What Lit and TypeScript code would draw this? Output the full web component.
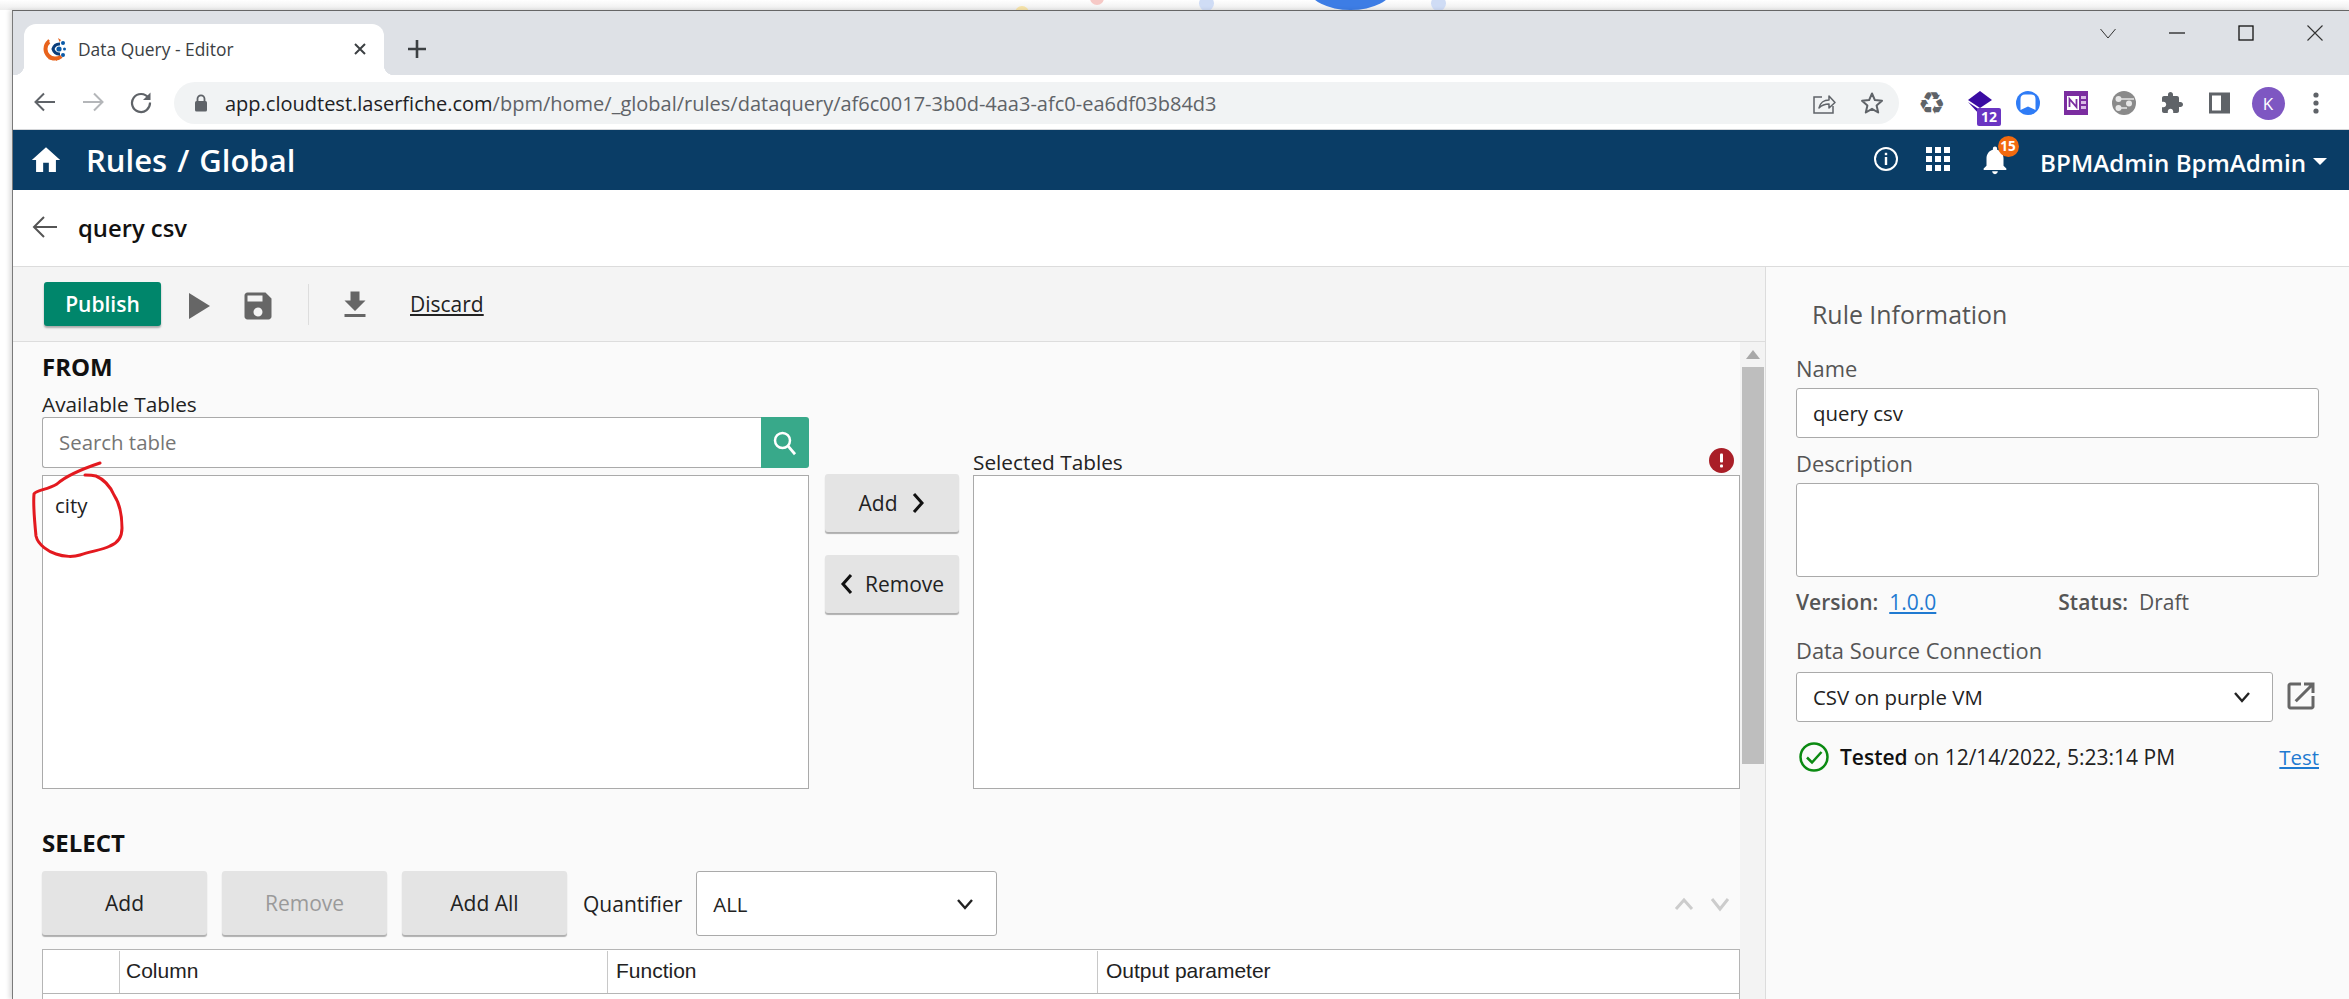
import { LitElement, html, css, svg } from "lit";
import { customElement } from "lit/decorators.js";

const ic = (cls: string, vb: string, body: unknown) =>
  html`<svg class=${cls} viewBox=${vb} aria-hidden="true">${body}</svg>`;

@customElement("app-root")
export class AppRoot extends LitElement {
  static styles = css`
    :host { display: block; width: 2349px; height: 999px; overflow: hidden; background: #fff; font-family: "Open Sans", "Noto Sans", sans-serif; color: #222; }
    svg { display: block; flex: none; }
    .strip { height: 10px; position: relative; overflow: hidden; background: linear-gradient(#fff, #ededed); }
    .blob { position: absolute; border-radius: 50%; }
    .shell { margin-left: 12px; border-left: 1px solid #7a7a7a; border-top: 1px solid #666; display: flex; flex-direction: column; height: 988px; box-shadow: -3px 0 4px rgba(0,0,0,.12); position: relative; }

    .tabbar { height: 64px; background: #dee1e6; display: flex; flex: none; }
    .tab { margin: 13px 0 0 11px; width: 360px; height: 51px; background: #fff; border-radius: 12px 12px 0 0; display: flex; align-items: center; position: relative; padding-bottom: 1px; box-sizing: border-box; }
    .tab::before, .tab::after { content: ""; position: absolute; bottom: 0; width: 10px; height: 10px; }
    .tab::before { left: -10px; background: radial-gradient(circle at 0 0, transparent 10px, #fff 10.5px); }
    .tab::after { right: -10px; background: radial-gradient(circle at 100% 0, transparent 10px, #fff 10.5px); }
    .fav { width: 24px; height: 26px; margin-left: 18px; }
    .tabtitle { margin-left: 12px; font-size: 17.4px; color: #3c4043; flex: 1; white-space: nowrap; }
    .tabx { width: 14px; height: 14px; margin-right: 17px; }
    .plus { width: 20px; height: 20px; margin: 28px 0 0 23px; }
    .winctl { margin-left: auto; display: flex; }
    .win { width: 69px; height: 44px; display: flex; align-items: center; justify-content: center; }
    .win svg { width: 16px; height: 16px; }

    .chrome { height: 54px; border-bottom: 1px solid #d4d6d9; background: #fff; display: flex; align-items: center; flex: none; padding-left: 8px; box-sizing: content-box; }
    .slot { width: 48px; height: 48px; display: flex; align-items: center; justify-content: center; flex: none; position: relative; }
    .slot svg { width: 24px; height: 24px; }
    .pill { margin-left: 9px; width: 1725px; height: 42px; border-radius: 21px; background: #f1f3f4; display: flex; align-items: center; flex: none; box-sizing: border-box; padding-right: 3px; margin-top: 2px; }
    .lock { width: 14px; height: 18px; margin-left: 20px; }
    .url { margin-left: 17px; font-size: 20px; color: #5f6368; white-space: nowrap; flex: 1; }
    .url b { font-weight: 400; color: #202124; }
    .exts { display: flex; margin-left: 9px; margin-top: 2px; }
    .recycle { font-family: "DejaVu Sans", sans-serif; font-size: 31px; color: #5f6368; line-height: 1; }
    .extbadge { position: absolute; left: 21px; top: 29px; width: 24px; height: 18px; border-radius: 2px; background: #6a35c2; color: #fff; font-size: 14px; font-weight: 700; line-height: 18px; text-align: center; }
    .avatar { width: 33px; height: 33px; border-radius: 50%; background: #7e57c2; color: #fff; font-size: 17px; line-height: 33px; text-align: center; }

    .nav { height: 60px; flex: none; background: #0a3d66; color: #fff; display: flex; align-items: center; }
    .home { width: 34px; height: 34px; margin-left: 16px; }
    .crumb { margin-left: 23px; font-size: 31px; font-weight: 600; white-space: pre; line-height: 40px; margin-top: -1px; word-spacing: 2px; }
    .navr { margin-left: auto; display: flex; align-items: center; }
    .info { width: 26px; height: 26px; margin-top: -2px; }
    .grid { width: 24px; height: 24px; margin-left: 27px; margin-top: -2px; }
    .bellbox { width: 34px; height: 34px; margin-left: 28px; position: relative; }
    .bellbox svg { width: 34px; height: 34px; }
    .bdg { position: absolute; left: 19.5px; top: -7px; width: 21px; height: 21px; border-radius: 50%; background: #f26a0f; color: #fff; font-size: 13.5px; font-weight: 700; line-height: 21px; text-align: center; }
    .user { margin-left: 28px; font-size: 24.2px; font-weight: 600; line-height: 32px; white-space: nowrap; margin-top: 5px; }
    .caret { width: 0; height: 0; border-left: 7.5px solid transparent; border-right: 7.5px solid transparent; border-top: 7.5px solid #fff; margin: 2px 22px 0 7px; }

    .sub { height: 76px; flex: none; border-bottom: 1px solid #dcdcdc; display: flex; align-items: center; background: #fff; }
    .sub svg { width: 26px; height: 24px; margin-left: 19px; margin-top: -2px; }
    .sub span { margin-left: 20px; font-size: 23.8px; font-weight: 600; color: #111; line-height: 30px; margin-top: -1px; }

    .work { flex: 1; min-height: 0; display: flex; overflow: hidden; }
    .main { width: 1752px; flex: none; display: flex; flex-direction: column; }
    .tools { height: 74px; flex: none; background: #f4f4f4; border-bottom: 1px solid #ddd; display: flex; align-items: center; }
    .publish { margin-left: 31px; width: 117px; height: 44px; background: #00866b; color: #fff; border-radius: 3px; box-shadow: 0 2px 2px rgba(0,0,0,.3); font-size: 21px; font-weight: 600; line-height: 44px; text-align: center; margin-top: -1px; }
    .play { width: 21px; height: 26px; margin-left: 28px; margin-top: 4px; }
    .save { width: 36px; height: 36px; margin-left: 30px; margin-top: 4px; }
    .divider { width: 1px; height: 41px; background: #ddd; margin-left: 32px; margin-top: 1px; }
    .dl { width: 36px; height: 36px; margin-left: 28px; margin-top: 2px; }
    .discard { margin-left: 37px; font-size: 21px; color: #222; text-decoration: underline; margin-top: -1px; }

    .body { flex: 1; min-height: 0; display: flex; background: #fafafa; }
    .content { width: 1727px; flex: none; padding-left: 29px; box-sizing: border-box; position: relative; }
    .h { font-size: 24px; font-weight: 700; line-height: 28px; color: #111; }
    .from { margin-top: 11px; }
    .lbl { font-size: 20.8px; line-height: 26px; color: #222; white-space: nowrap; }
    .transfer { display: flex; align-items: flex-end; margin-top: 10px; }
    .col { width: 767px; flex: none; }
    .search { height: 51px; display: flex; margin-bottom: 7px; }
    .searchbox { flex: 1; border: 1px solid #aaa; border-right: 0; border-radius: 3px 0 0 3px; background: #fff; font-size: 20.4px; color: #757575; line-height: 48px; padding-left: 16px; }
    .searchbtn { width: 48px; background: #38a98a; border-radius: 0 3px 3px 0; display: flex; align-items: center; justify-content: center; }
    .searchbtn svg { width: 30px; height: 30px; }
    .list { height: 314px; border: 1px solid #aaa; background: #fff; box-sizing: border-box; padding: 14px 0 0 12px; font-size: 20.4px; line-height: 30px; color: #222; }
    .mid { width: 134px; height: 315px; margin: 0 14px 0 16px; display: flex; flex-direction: column; gap: 23px; flex: none; }
    .btn { background: #e4e4e4; border-radius: 3px; box-shadow: 0 2px 1px rgba(0,0,0,.3); font-size: 21px; color: #222; display: flex; align-items: center; justify-content: center; flex: none; }
    .btn.t { height: 58px; }
    .btn.t svg { width: 14px; height: 22px; }
    .btn.add svg { margin-left: 14px; }
    .btn.rem svg { margin-right: 11px; }
    .reqrow { display: flex; align-items: center; justify-content: space-between; }
    .err { width: 25px; height: 25px; margin-right: 6px; margin-top: -4px; }
    .sel { margin-top: 40px; }
    .selrow { display: flex; align-items: flex-start; margin-top: 14px; height: 65px; }
    .btn.s { width: 165px; height: 64px; margin-right: 15px; }
    .btn.dis { color: #9a9a9a; }
    .qlbl { font-size: 21px; line-height: 66px; margin-right: 14px; margin-left: 1px; }
    .dropdown { border: 1px solid #aaa; border-radius: 3px; background: #fff; box-sizing: border-box; display: flex; align-items: center; font-size: 20.4px; color: #222; flex: none; }
    .q { width: 301px; height: 65px; padding: 1px 0 0 16px; }
    .q svg { width: 20px; height: 20px; margin-left: auto; margin-right: 21px; margin-top: -1px; }
    .updown { margin-left: auto; display: flex; height: 65px; align-items: center; margin-right: 2px; }
    .updown svg { width: 36px; height: 20px; }
    .table { margin-top: 13px; width: 1698px; height: 60px; border: 1px solid #b5b5b5; border-width: 1.5px 1px 0; background: #fff; box-sizing: border-box; font-family: "Liberation Sans", Arial, sans-serif; font-size: 21px; color: #222; }
    .thead { height: 43px; display: grid; grid-template-columns: 77px 488px 490px 1fr; border-bottom: 1.5px solid #b5b5b5; box-sizing: content-box; }
    .thead div { padding: 1px 0 0 6px; line-height: 37px; border-right: 1px solid #c8c8c8; margin-top: 1px; white-space: nowrap; }
    .thead div:nth-child(3) { padding-left: 8px; }
    .thead div:last-child { border-right: 0; padding-left: 8px; }
    .scroll { width: 25px; flex: none; background: #f3f3f3; display: flex; flex-direction: column; align-items: center; }
    .scroll svg { width: 14px; height: 25px; }
    .thumb { width: 22px; height: 397px; background: #bebebe; margin-left: 1px; }
    .mark { position: absolute; left: 20px; top: 121px; width: 100px; height: 100px; pointer-events: none; overflow: visible; }

    .side { flex: 1; border-left: 1px solid #dcdcdc; background: #fafafa; box-sizing: border-box; padding: 33px 30px 0; color: #555; }
    .title { font-size: 24.9px; line-height: 28px; margin: 0 0 28px 16px; color: #555; white-space: nowrap; }
    .f { font-size: 21.9px; line-height: 26px; color: #555; margin-bottom: 6px; white-space: nowrap; }
    .inp { border: 1px solid #aaa; border-radius: 3px; background: #fff; box-sizing: border-box; font-size: 20.4px; color: #222; }
    .name { height: 50px; line-height: 49px; padding-left: 16px; margin-bottom: 13px; }
    .desc { height: 94px; margin-bottom: 12px; }
    .meta { display: flex; font-size: 21px; line-height: 26px; color: #555; margin-bottom: 23px; white-space: nowrap; }
    .meta b { font-weight: 600; }
    .meta a { color: #1f7ad1; text-decoration: underline; margin-left: 11px; }
    .meta .st { margin-left: 122px; }
    .meta .dr { margin-left: 11px; }
    .dsrow { display: flex; align-items: center; margin-top: 8px; }
    .ds { width: 477px; height: 50px; padding: 0 0 0 16px; }
    .ds svg { width: 20px; height: 20px; margin-left: auto; margin-right: 20px; }
    .ext { width: 36px; height: 36px; margin-left: 10px; margin-top: -3px; }
    .tested { display: flex; align-items: center; margin-top: 20px; height: 30px; font-size: 21px; color: #222; white-space: nowrap; }
    .tested svg { width: 30px; height: 30px; margin-left: 3px; margin-right: 11px; }
    .tested b { font-weight: 600; color: #111; margin-right: 6px; }
    .tested a { margin-left: auto; color: #1f7ad1; text-decoration: underline; font-size: 20.4px; }
  `;

  render() {
    return html`
      <div class="strip">
        <div class="blob" style="left:1309px;top:-32px;width:83px;height:42px;background:#3d7de5"></div>
        <div class="blob" style="left:1015px;top:6px;width:14px;height:14px;background:#f6e3a9"></div>
        <div class="blob" style="left:1090px;top:-9px;width:14px;height:14px;background:#f6c9c6"></div>
        <div class="blob" style="left:1199px;top:-4px;width:15px;height:15px;background:#cfdcf5"></div>
        <div class="blob" style="left:1431px;top:-4px;width:15px;height:15px;background:#cfdcf5"></div>
      </div>
      <div class="shell">
        <div class="tabbar">
          <div class="tab">
            ${ic("fav", "0 0 24 26", svg`
              <circle cx="13" cy="13" r="9.5" fill="none" stroke="#e8631c" stroke-width="4" stroke-dasharray="30 30" stroke-dashoffset="-8"/>
              <path d="M16 2l3 2-1.500 2zM6 3l2 2-3 2zM2 13l3-1v3zM6 23l2-2 2 3zM14 25l0-3 3 1z" fill="#e8631c"/>
              <path d="M18 8a7 7 0 0 0-7 5 7 7 0 0 0 7 5" fill="none" stroke="#0a3d7a" stroke-width="3"/>
              <circle cx="21" cy="7" r="2" fill="#0a5aa8"/><circle cx="17" cy="13" r="2.600" fill="#0a5aa8"/><circle cx="22.500" cy="13" r="1.500" fill="#0a5aa8"/><circle cx="21" cy="19" r="2" fill="#0a5aa8"/>
            `)}
            <span class="tabtitle">Data Query - Editor</span>
            ${ic("tabx", "0 0 14 14", svg`<path d="M2 2l10 10M12 2L2 12" stroke="#3c4043" stroke-width="2" fill="none"/>`)}
          </div>
          ${ic("plus", "0 0 20 20", svg`<path d="M10 1v18M1 10h18" stroke="#3c4043" stroke-width="2.600" fill="none"/>`)}
          <div class="winctl">
            <div class="win">${ic("", "0 0 16 16", svg`<path d="M0.500 4l7.500 9 7.500-9" stroke="#333" stroke-width="1" fill="none"/>`)}</div>
            <div class="win">${ic("", "0 0 16 16", svg`<path d="M0 8h16" stroke="#222" stroke-width="1.300" fill="none"/>`)}</div>
            <div class="win">${ic("", "0 0 16 16", svg`<rect x="1" y="1" width="14" height="14" stroke="#111" stroke-width="1.300" fill="none"/>`)}</div>
            <div class="win">${ic("", "0 0 16 16", svg`<path d="M0.500 0.500l15 15M15.500 0.500l-15 15" stroke="#333" stroke-width="1.100" fill="none"/>`)}</div>
          </div>
        </div>

        <div class="chrome">
          <div class="slot">${ic("", "0 0 24 24", svg`<path d="M22 12H3M11 3.500L2.500 12l8.500 8.500" stroke="#5f6368" stroke-width="2" fill="none"/>`)}</div>
          <div class="slot">${ic("", "0 0 24 24", svg`<path d="M2 12h19M13 3.500l8.500 8.500-8.500 8.500" stroke="#b4b6b9" stroke-width="2" fill="none"/>`)}</div>
          <div class="slot">${ic("", "0 0 24 24", svg`<path d="M19.500 8A9 9 0 1 0 21 12.500" stroke="#5f6368" stroke-width="2.200" fill="none"/><path d="M21.500 2.500v7.500h-7.500z" fill="#5f6368"/>`)}</div>
          <div class="pill">
            ${ic("lock", "0 0 14 18", svg`<path d="M3.500 7V4.800a3.500 3.500 0 0 1 7 0V7" stroke="#5f6368" stroke-width="1.800" fill="none"/><rect x="1" y="7" width="12" height="10.500" rx="1.500" fill="#5f6368"/>`)}
            <span class="url"><b>app.cloudtest.laserfiche.com</b>/bpm/home/_global/rules/dataquery/af6c0017-3b0d-4aa3-afc0-ea6df03b84d3</span>
            <div class="slot">${ic("", "0 0 24 24", svg`<path d="M10 6H2v16h19v-7" stroke="#5f6368" stroke-width="1.500" fill="none"/><path d="M7 17c1-5 5-8 10-8V5l6 6.500L17 17v-4c-4 0-7 1-10 4z" stroke="#5f6368" stroke-width="1.500" fill="none" stroke-linejoin="round"/>`)}</div>
            <div class="slot">${ic("", "0 0 24 24", svg`<path d="M12 2.500l2.900 6.600 7.100.7-5.400 4.700 1.600 7-6.200-3.700-6.200 3.700 1.600-7L2 9.800l7.100-.7z" stroke="#5f6368" stroke-width="2" fill="none" stroke-linejoin="round"/>`)}</div>
          </div>
          <div class="exts">
            <div class="slot"><span class="recycle">♻</span></div>
            <div class="slot">
              ${ic("", "0 0 24 24", svg`<path d="M12 0l12 9-12 8L0 9z" fill="#3a0ca3"/><path d="M0 11l9 6 3 2v5z" fill="#3a0ca3"/>`)}
              <span class="extbadge">12</span>
            </div>
            <div class="slot">${ic("", "0 0 24 24", svg`<ellipse cx="12" cy="12" rx="12" ry="12" fill="#2f7cf6"/><path d="M4.500 8Q4.500 3.500 9 3.500h6q4.500 0 4.500 4.500V19l-7.500-3.500L4.500 19z" fill="#fff"/>`)}</div>
            <div class="slot">${ic("", "0 0 24 24", svg`<rect width="24" height="24" fill="#7b2da0"/><rect x="3" y="5" width="12" height="14" fill="#fff"/><path d="M5.500 16V8l7 8V8" stroke="#7b2da0" stroke-width="1.800" fill="none"/><path d="M17 5h5v3h-5zM17 10h5v3h-5zM17 15h5v3h-5z" fill="#d9b9e6"/>`)}</div>
            <div class="slot">${ic("", "0 0 24 24", svg`<circle cx="12" cy="12" r="12" fill="#8a8a8a"/><circle cx="6.500" cy="8" r="3" fill="#e6e6e6"/><circle cx="6.500" cy="17" r="3" fill="#e6e6e6"/><circle cx="17" cy="12.500" r="3" fill="#e6e6e6"/><path d="M9 8h13M9 17h6" stroke="#e6e6e6" stroke-width="1.400"/>`)}</div>
            <div class="slot">${ic("", "0 0 24 24", svg`<path d="M20.500 11H19V7c0-1.100-.9-2-2-2h-4V3.500C13 2.120 11.880 1 10.500 1S8 2.120 8 3.500V5H4c-1.100 0-1.990.9-1.990 2v3.800H3.500c1.490 0 2.700 1.210 2.700 2.700s-1.210 2.700-2.700 2.700H2V20c0 1.100.9 2 2 2h3.800v-1.500c0-1.490 1.210-2.700 2.700-2.700 1.490 0 2.700 1.210 2.700 2.700V22H17c1.100 0 2-.9 2-2v-4h1.500c1.380 0 2.500-1.120 2.500-2.500S21.880 11 20.500 11z" fill="#5f6368"/>`)}</div>
            <div class="slot">${ic("", "0 0 24 24", svg`<rect x="1" y="1.500" width="21" height="21" fill="#5f6368"/><rect x="4" y="4.500" width="9" height="15" fill="#fff"/>`)}</div>
            <div class="slot"><div class="avatar">K</div></div>
            <div class="slot">${ic("", "0 0 24 24", svg`<circle cx="12" cy="4" r="2.600" fill="#5f6368"/><circle cx="12" cy="12" r="2.600" fill="#5f6368"/><circle cx="12" cy="20" r="2.600" fill="#5f6368"/>`)}</div>
          </div>
        </div>

        <div class="nav">
          ${ic("home", "0 0 24 24", svg`<path d="M10 20.500v-6.500h4v6.500h5v-8.500h3L12 3 2 12h3v8.500z" fill="#fff"/>`)}
          <span class="crumb">Rules / Global</span>
          <div class="navr">
            ${ic("info", "0 0 26 26", svg`<circle cx="13" cy="13" r="11" stroke="#fff" stroke-width="2" fill="none"/><rect x="11.800" y="11" width="2.400" height="8" fill="#fff"/><rect x="11.800" y="6.800" width="2.400" height="2.400" fill="#fff"/>`)}
            ${ic("grid", "0 0 24 24", svg`<path d="M0 0h6v6H0zM9 0h6v6H9zM18 0h6v6h-6zM0 9h6v6H0zM9 9h6v6H9zM18 9h6v6h-6zM0 18h6v6H0zM9 18h6v6H9zM18 18h6v6h-6z" fill="#fff"/>`)}
            <div class="bellbox">
              ${ic("", "0 0 24 24", svg`<path d="M12 22c1.100 0 2-.9 2-2h-4c0 1.100.89 2 2 2zm6-6v-5c0-3.070-1.640-5.640-4.500-6.320V4c0-.83-.67-1.500-1.500-1.500s-1.500.67-1.500 1.500v.68C7.630 5.360 6 7.920 6 11v5l-2 2v1h16v-1l-2-2z" fill="#fff"/>`)}
              <span class="bdg">15</span>
            </div>
            <span class="user">BPMAdmin BpmAdmin</span>
            <span class="caret"></span>
          </div>
        </div>

        <div class="sub">
          ${ic("", "0 0 26 24", svg`<path d="M25 12H2M12 2L2 12l10 10" stroke="#555" stroke-width="2" fill="none"/>`)}
          <span>query csv</span>
        </div>

        <div class="work">
          <div class="main">
            <div class="tools">
              <div class="publish">Publish</div>
              ${ic("play", "0 0 21 26", svg`<path d="M0 0l21 13L0 26z" fill="#666"/>`)}
              ${ic("save", "0 0 24 24", svg`<path d="M17 3H5c-1.110 0-2 .9-2 2v14c0 1.100.89 2 2 2h14c1.100 0 2-.9 2-2V7l-4-4zm-5 16c-1.660 0-3-1.340-3-3s1.340-3 3-3 3 1.340 3 3-1.340 3-3 3zm3-10H5V5h10v4z" fill="#666"/>`)}
              <div class="divider"></div>
              ${ic("dl", "0 0 24 24", svg`<path d="M19 9h-4V3H9v6H5l7 7 7-7zM5 18v2h14v-2H5z" fill="#666"/>`)}
              <span class="discard">Discard</span>
            </div>
            <div class="body">
              <div class="content">
                <div class="h from">FROM</div>
                <div class="transfer">
                  <div class="col">
                    <div class="lbl">Available Tables</div>
                    <div class="search">
                      <div class="searchbox">Search table</div>
                      <div class="searchbtn">${ic("", "0 0 24 24", svg`<circle cx="10" cy="10" r="6" stroke="#fff" stroke-width="2" fill="none"/><path d="M14.500 14.500L20 21" stroke="#fff" stroke-width="2.200"/>`)}</div>
                    </div>
                    <div class="list">city</div>
                  </div>
                  <div class="mid">
                    <div class="btn t add">Add${ic("", "0 0 14 22", svg`<path d="M3 2l8 9-8 9" stroke="#111" stroke-width="3" fill="none"/>`)}</div>
                    <div class="btn t rem">${ic("", "0 0 14 22", svg`<path d="M11 2l-8 9 8 9" stroke="#111" stroke-width="3" fill="none"/>`)}Remove</div>
                  </div>
                  <div class="col">
                    <div class="reqrow">
                      <span class="lbl">Selected Tables</span>
                      ${ic("err", "0 0 25 25", svg`<circle cx="12.500" cy="12.500" r="12.500" fill="#a91e27"/><rect x="11" y="5.500" width="3" height="9" rx="1" fill="#fff"/><rect x="11" y="16.500" width="3" height="3" rx="1" fill="#fff"/>`)}
                    </div>
                    <div class="list"></div>
                  </div>
                </div>
                <div class="h sel">SELECT</div>
                <div class="selrow">
                  <div class="btn s">Add</div>
                  <div class="btn s dis">Remove</div>
                  <div class="btn s">Add All</div>
                  <span class="qlbl">Quantifier</span>
                  <div class="dropdown q">ALL${ic("", "0 0 20 20", svg`<path d="M3 6l7 8 7-8" stroke="#222" stroke-width="2.400" fill="none"/>`)}</div>
                  <div class="updown">
                    ${ic("", "0 0 36 20", svg`<path d="M10 15l8-9 8 9" stroke="#ccc" stroke-width="3" fill="none"/>`)}
                    ${ic("", "0 0 36 20", svg`<path d="M10 5l8 10 8-10" stroke="#ccc" stroke-width="3" fill="none"/>`)}
                  </div>
                </div>
                <div class="table">
                  <div class="thead"><div></div><div>Column</div><div>Function</div><div>Output parameter</div></div>
                </div>
                ${ic("mark", "33 463 100 100", svg`<path d="M100 463C88 467 68 474 57 484C47 490 36 490 34 494C33 505 35 526 36 536C38 545 49 552 56 554C64 557 74 557 80 555C92 551 102 550 110 546C118 543 122 536 122 528C122 516 120 504 114 495C110 486 103 479 96 476C92 475 88 475 85 475" stroke="#e3191f" stroke-width="3" fill="none" stroke-linecap="round" stroke-linejoin="round"/>`)}
              </div>
              <div class="scroll">
                ${ic("", "0 0 14 25", svg`<path d="M0 17l7-9 7 9z" fill="#a8a8a8"/>`)}
                <div class="thumb"></div>
              </div>
            </div>
          </div>
          <div class="side">
            <div class="title">Rule Information</div>
            <div class="f">Name</div>
            <div class="inp name">query csv</div>
            <div class="f">Description</div>
            <div class="inp desc"></div>
            <div class="meta"><b>Version:</b><a>1.0.0</a><b class="st">Status:</b><span class="dr">Draft</span></div>
            <div class="f">Data Source Connection</div>
            <div class="dsrow">
              <div class="inp dropdown ds">CSV on purple VM${ic("", "0 0 20 20", svg`<path d="M3 6l7 8 7-8" stroke="#222" stroke-width="2.400" fill="none"/>`)}</div>
              ${ic("ext", "0 0 24 24", svg`<path d="M19 19H5V5h7V3H5c-1.110 0-2 .9-2 2v14c0 1.100.89 2 2 2h14c1.100 0 2-.9 2-2v-7h-2v7zM14 3v2h3.590l-9.830 9.830 1.410 1.410L19 6.410V10h2V3h-7z" fill="#666"/>`)}
            </div>
            <div class="tested">
              ${ic("", "0 0 30 30", svg`<circle cx="15" cy="15" r="13.500" stroke="#0b8a12" stroke-width="2.500" fill="none"/><path d="M8 15.500l5 5L22.500 10" stroke="#0b8a12" stroke-width="2.500" fill="none"/>`)}
              <b>Tested</b>on 12/14/2022, 5:23:14 PM<a>Test</a>
            </div>
          </div>
        </div>
      </div>
    `;
  }
}
